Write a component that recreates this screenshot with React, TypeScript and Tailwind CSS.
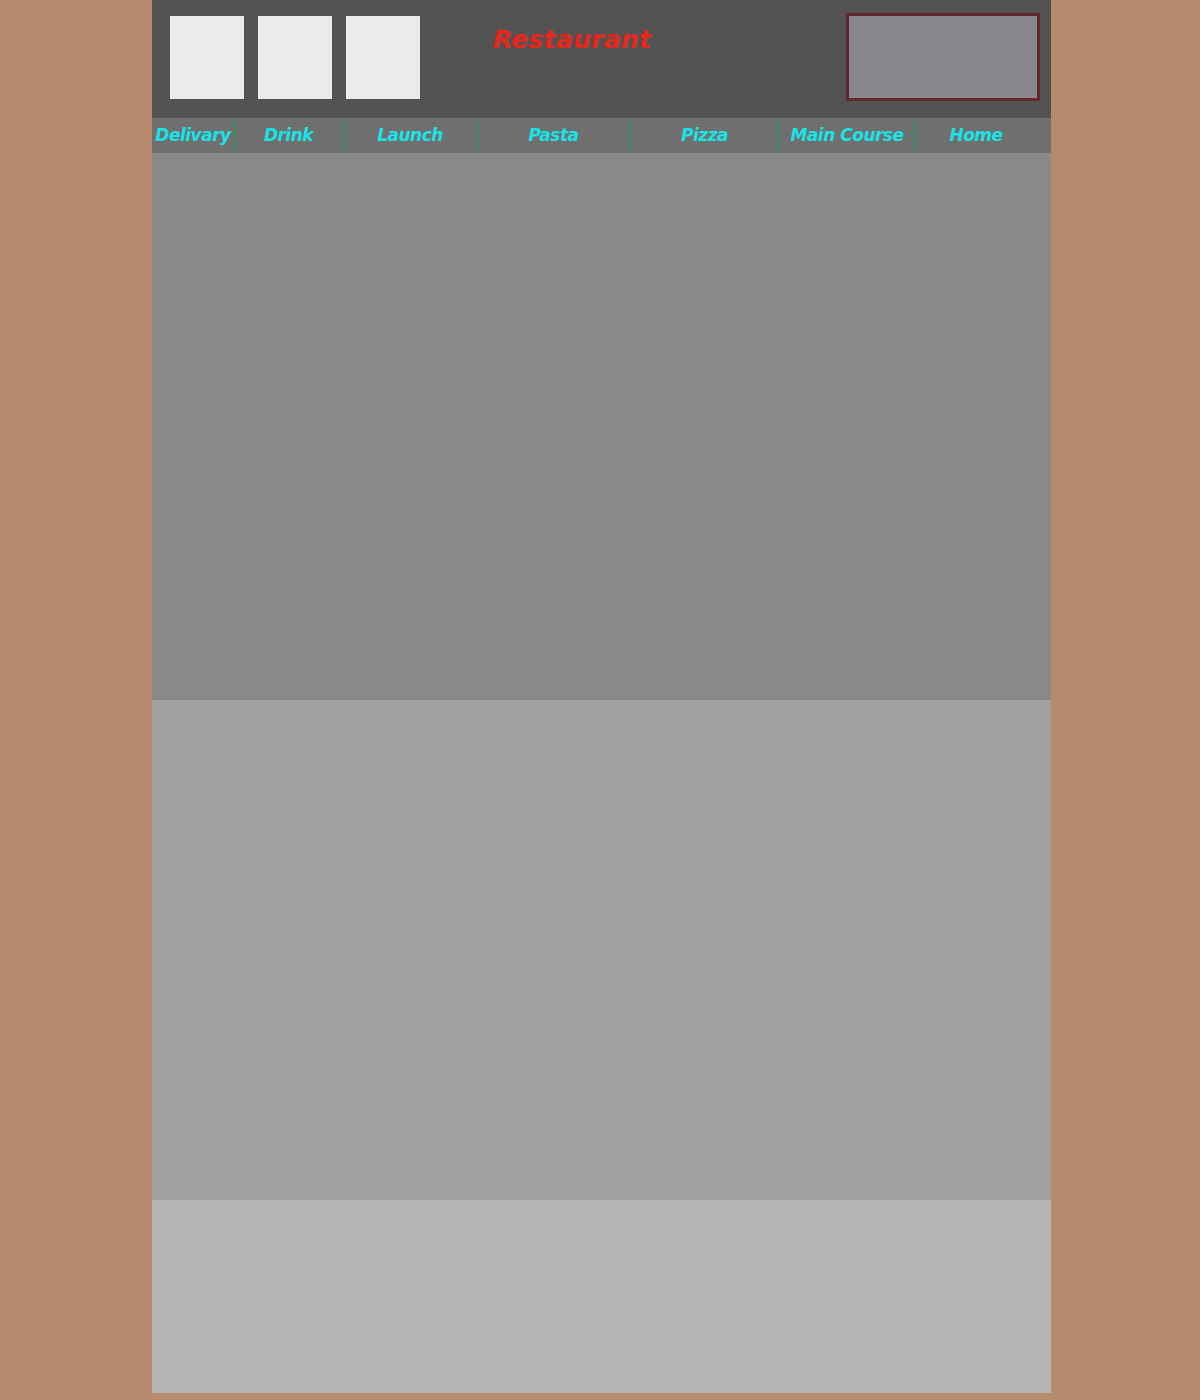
const navItems = [
  { label: "Delivary", width: "w-[82px]" },
  { label: "Drink", width: "w-[108px]" },
  { label: "Launch", width: "w-[135px]" },
  { label: "Pasta", width: "w-[152px]" },
  { label: "Pizza", width: "w-[150px]" },
  { label: "Main Course", width: "w-[135px]" },
  { label: "Home", width: "w-[123px]" },
];

export default function App() {
  return (
    <div className="min-h-[1400px] bg-[#b68a6d] font-['DejaVu_Sans',sans-serif]">
      <div className="ml-[152px] w-[899px]">
        {/* header */}
        <header className="flex h-[118px] bg-[#535353]">
          <div className="flex gap-[14px] pl-[18px] pt-[16px]">
            <div className="h-[83px] w-[74px] bg-[#ebebeb]" />
            <div className="h-[83px] w-[74px] bg-[#ebebeb]" />
            <div className="h-[83px] w-[74px] bg-[#ebebeb]" />
          </div>
          <h1 className="ml-[73px] pt-[27px] text-[25px] font-bold italic leading-none tracking-[0.3px] text-[#e8261c]">
            Restaurant
          </h1>
          <div className="ml-auto mr-[11px] mt-[13px] h-[88px] w-[194px] border-[3px] border-[#62282b] bg-[#88878b]" />
        </header>

        {/* nav */}
        <nav className="flex h-[35px] bg-[#6f6f6f]">
          {navItems.map((item, i) => (
            <div
              key={item.label}
              className={`flex items-center justify-center ${item.width} ${i > 0 ? "border-l border-[#1aa65a]" : ""}`}
            >
              <span className="text-[17px] font-bold italic leading-none tracking-[-0.5px] text-[#19e3e6] whitespace-nowrap">
                {item.label}
              </span>
            </div>
          ))}
        </nav>

        <section className="h-[547px] bg-[#898989]" />
        <section className="h-[500px] bg-[#a0a0a0]" />
        <section className="h-[193px] bg-[#b5b5b5]" />
      </div>
    </div>
  );
}
